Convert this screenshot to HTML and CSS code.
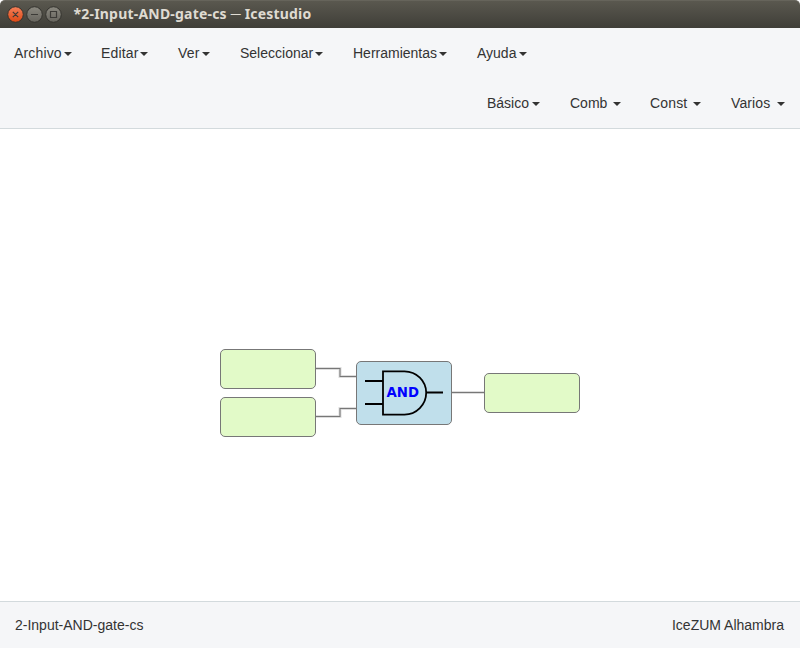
FILE: index.html
```html
<!DOCTYPE html>
<html lang="es">
<head>
<meta charset="utf-8">
<title>Icestudio</title>
<link rel="stylesheet" href="styles.css">
</head>
<body>
<header class="titlebar">
  <svg class="controls" width="62" height="28" viewBox="0 0 62 28">
    <defs>
      <linearGradient id="close" x2="0" y2="1"><stop stop-color="#f58059"/><stop offset="1" stop-color="#dd4814"/></linearGradient>
      <linearGradient id="plain" x2="0" y2="1"><stop stop-color="#8b8980"/><stop offset="1" stop-color="#66645d"/></linearGradient>
    </defs>
    <g stroke="#34332e">
      <circle cx="15.5" cy="14.5" r="7.8" fill="url(#close)"/>
      <circle cx="34.5" cy="14.5" r="7.8" fill="url(#plain)"/>
      <circle cx="53.5" cy="14.5" r="7.8" fill="url(#plain)"/>
    </g>
    <g fill="none" stroke="#3c3b37" stroke-width="1.2">
      <path d="M12.8 11.8l5.4 5.4M18.2 11.8l-5.4 5.4M31 14.5h7M50.500 11.500h6v6h-6z"/>
    </g>
  </svg>
  <h1 class="title">*2-Input-AND-gate-cs <span class="dash">─</span> Icestudio</h1>
</header>
<nav class="navbar">
  <ul class="menu">
    <li class="item"><span class="label archivo">Archivo</span><i class="caret"></i></li>
    <li class="item"><span class="label editar">Editar</span><i class="caret"></i></li>
    <li class="item"><span class="label ver">Ver</span><i class="caret"></i></li>
    <li class="item"><span class="label seleccionar">Seleccionar</span><i class="caret"></i></li>
    <li class="item"><span class="label herramientas">Herramientas</span><i class="caret"></i></li>
    <li class="item"><span class="label ayuda">Ayuda</span><i class="caret"></i></li>
  </ul>
  <ul class="menu blocks">
    <li class="item"><span class="label basico">Básico</span><i class="caret"></i></li>
    <li class="item"><span class="label comb">Comb</span><i class="caret"></i></li>
    <li class="item"><span class="label const">Const</span><i class="caret"></i></li>
    <li class="item"><span class="label varios">Varios</span><i class="caret"></i></li>
  </ul>
</nav>
<main class="canvas">
  <svg class="diagram" width="800" height="472" viewBox="0 129 800 472">
    <g fill="none" stroke="#ddd" stroke-width="3">
      <path d="M316 368.5h24v8h16M316 416.5h24v-8h16M452 392.5h32"/>
    </g>
    <g fill="none" stroke="#777" stroke-width="1.1">
      <path d="M316 368.5h24v8h16M316 416.5h24v-8h16M452 392.5h32"/>
    </g>
    <g fill="#e2fac8" stroke="#777">
      <rect x="220.5" y="349.5" width="95" height="39" rx="4.5"/>
      <rect x="220.5" y="397.5" width="95" height="39" rx="4.5"/>
      <rect x="484.5" y="373.5" width="95" height="39" rx="4.5"/>
      <rect x="356.5" y="361.5" width="95" height="63" rx="4.5" fill="#c0dfeb"/>
    </g>
    <path d="M383 371.4h21.5c12 0 21.7 9.6 21.7 21.4s-9.7 21.8-21.7 21.8H383zM365 381h18M365 404h18M426.2 392.5H443" fill="none" stroke="#000" stroke-width="1.8"/>
    <text class="gate" x="386.5" y="397">AND</text>
  </svg>
</main>
<footer class="status"><span class="project">2-Input-AND-gate-cs</span><span class="board">IceZUM Alhambra</span></footer>
</body>
</html>
```
FILE: styles.css
```css
* { box-sizing: border-box; }
body {
  margin: 0;
  height: 648px;
  display: flex;
  flex-direction: column;
  background: #fff;
  color: #333;
  font: 14px/20px "Liberation Sans", Arial, sans-serif;
  overflow: hidden;
}
.titlebar {
  height: 28px;
  display: flex;
  align-items: center;
  background: linear-gradient(#5a584f, #3f3e38);
  border-top: 1px solid #66645b;
  border-radius: 5px 5px 0 0;
}
.controls { flex: none; margin-top: -1px; }
.title {
  margin: -2px 0 0 11.500px;
  color: #dfdbd2;
  font: bold 14px/26px "Noto Sans", sans-serif;
  letter-spacing: .2px;
  white-space: nowrap;
}
.dash { font-weight: normal; }
.navbar {
  height: 101px;
  background: #f5f6f8;
  border-bottom: 1px solid #d3dadd;
}
.menu {
  height: 50px;
  margin: 0;
  padding: 0 0 0 14px;
  display: flex;
  align-items: center;
  gap: 30px;
  list-style: none;
}
.blocks { justify-content: flex-end; padding: 0 15px 0 0; }
.item { display: flex; align-items: center; }
.label { white-space: nowrap; }
.caret {
  border: 4px solid transparent;
  border-top-color: #333;
  border-bottom: 0;
  margin-top: 2px;
}
.archivo { width: 50px; letter-spacing: .15px; }
.editar { width: 38px; text-indent: -1px; letter-spacing: .15px; }
.ver { width: 24px; letter-spacing: .2px; }
.seleccionar { width: 75px; }
.herramientas { width: 86px; }
.ayuda { width: 42px; }
.basico { width: 45px; text-indent: 1px; }
.blocks .item:first-child .caret { position: relative; left: 1px; }
.comb { width: 44px; text-indent: 1px; }
.const { width: 43px; letter-spacing: .15px; }
.varios { width: 46px; letter-spacing: .1px; }
.comb + .caret { position: relative; left: 1px; }
.comb { width: 43px; }
.canvas { flex: 1; min-height: 0; }
.diagram { display: block; }
.gate { fill: #00f; font: bold 13.3px "DejaVu Sans", sans-serif; }
.status {
  height: 47px;
  display: flex;
  justify-content: space-between;
  align-items: center;
  padding: 0 16px 0 15px;
  background: #f5f6f8;
  border-top: 1px solid #d3dadd;
}
```
